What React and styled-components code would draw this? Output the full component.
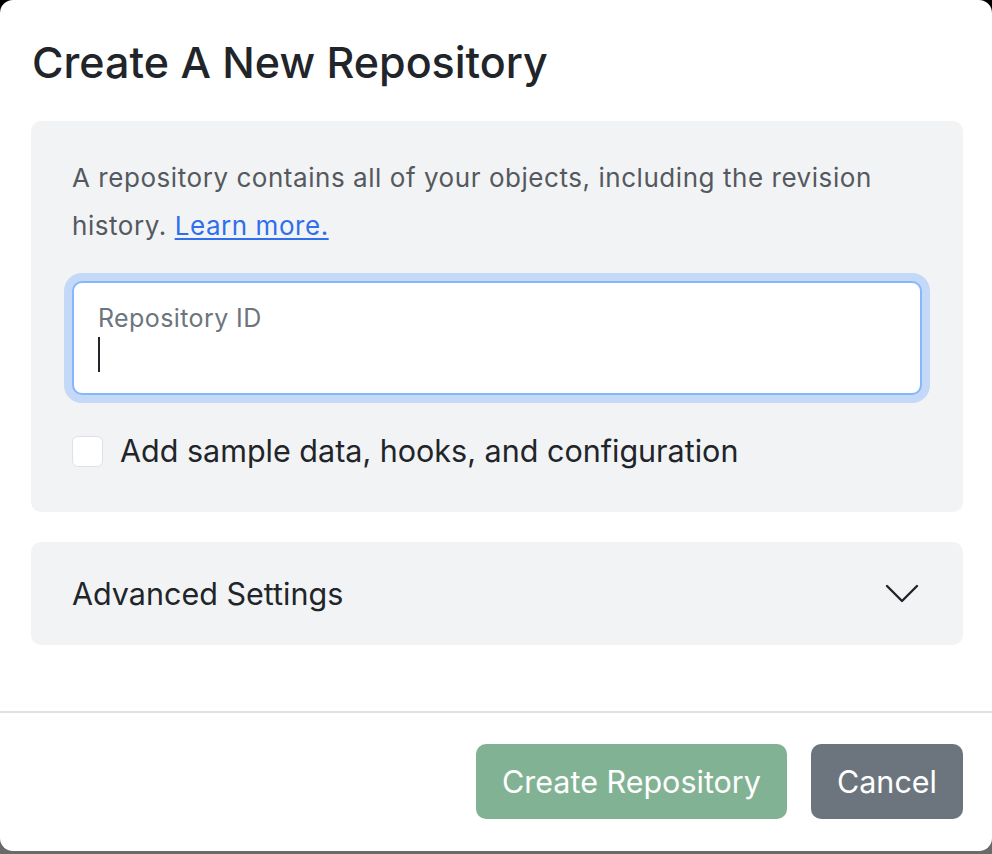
import React from 'react'
import styled, { createGlobalStyle } from 'styled-components'

const GlobalStyle = createGlobalStyle`
  html, body {
    margin: 0;
    padding: 0;
    height: 100%;
    background: linear-gradient(#000000, #6a6a6a);
  }
  body {
    font-family: Inter, "Noto Sans", "Liberation Sans", sans-serif;
    color: #212529;
  }
  * { box-sizing: border-box; }
`

function ChevronDown() {
  return (
    <svg width="34" height="20" viewBox="0 0 34 20" fill="none">
      <path d="M2 2 L17 17 L32 2" stroke="#212529" strokeWidth="2.4" strokeLinecap="round" strokeLinejoin="round" />
    </svg>
  )
}

function App() {
  return (
    <>
      <GlobalStyle />
      <Modal>
        <Header>
          <Title>Create A New Repository</Title>
        </Header>
        <Body>
          <Panel>
            <Intro>
              A repository contains all of your objects, including the revision history.{' '}
              <Link href="#">Learn more.</Link>
            </Intro>
            <Floating>
              <FloatLabel>Repository ID</FloatLabel>
              <Caret />
            </Floating>
            <CheckRow>
              <CheckBox />
              <CheckLabel>Add sample data, hooks, and configuration</CheckLabel>
            </CheckRow>
          </Panel>
          <Accordion>
            <AccordionTitle>Advanced Settings</AccordionTitle>
            <ChevronDown />
          </Accordion>
        </Body>
        <Footer>
          <Button $variant="success">Create Repository</Button>
          <Button $variant="secondary">Cancel</Button>
        </Footer>
      </Modal>
    </>
  )
}

export default App

const Modal = styled.div`
  width: 992px;
  height: 851px;
  background: #ffffff;
  border-radius: 13px;
  display: flex;
  flex-direction: column;
  overflow: hidden;
`

const Header = styled.div`
  padding: 31px 32px 0;
  height: 121px;
`

const Title = styled.h2`
  margin: 0;
  font-size: 43px;
  font-weight: 500;
  line-height: 62px;
  color: #212529;
`

const Body = styled.div`
  padding: 0 29px 0 31px;
  display: flex;
  flex-direction: column;
  gap: 30px;
  flex: 1;
`

const Panel = styled.div`
  background: #f2f3f5;
  border-radius: 10px;
  padding: 33px 41px 0;
  height: 391px;
`

const Intro = styled.p`
  margin: 0 0 31px;
  font-size: 26px;
  letter-spacing: 0.55px;
  line-height: 48px;
  color: #54595f;
`

const Link = styled.a`
  color: #2f6fed;
  text-decoration: underline;
  text-underline-offset: 3px;
`

const Floating = styled.div`
  position: relative;
  height: 114px;
  background: #ffffff;
  border: 2px solid #86b7fe;
  border-radius: 10px;
  box-shadow: 0 0 0 8px rgba(13, 110, 253, 0.2);
  padding: 20px 24px 0;
`

const FloatLabel = styled.div`
  font-size: 25px;
  letter-spacing: 0.4px;
  line-height: 30px;
  color: #6c757d;
`

const Caret = styled.div`
  width: 2px;
  height: 35px;
  margin-top: 4px;
  background: #212529;
`

const CheckRow = styled.div`
  display: flex;
  align-items: center;
  gap: 17px;
  margin-top: 36px;
`

const CheckBox = styled.div`
  width: 31px;
  height: 31px;
  border: 1.5px solid #dee2e6;
  border-radius: 6px;
  background: #ffffff;
`

const CheckLabel = styled.span`
  font-size: 30.5px;
  line-height: 40px;
  color: #212529;
`

const Accordion = styled.div`
  height: 103px;
  background: #f2f3f5;
  border-radius: 10px;
  padding: 0 44px 0 41px;
  display: flex;
  align-items: center;
  justify-content: space-between;
`

const AccordionTitle = styled.span`
  font-size: 30.5px;
  color: #212529;
`

const Footer = styled.div`
  border-top: 2px solid #dee2e6;
  height: 140px;
  padding: 31px 29px 0;
  display: flex;
  justify-content: flex-end;
  align-items: flex-start;
  gap: 24px;
`

const Button = styled.button`
  height: 75px;
  padding: 0 26px;
  border: none;
  border-radius: 10px;
  font-family: inherit;
  font-size: 30.5px;
  color: #ffffff;
  background: ${(p) => (p.$variant === 'success' ? '#82b294' : '#6c757d')};
  cursor: pointer;
`
